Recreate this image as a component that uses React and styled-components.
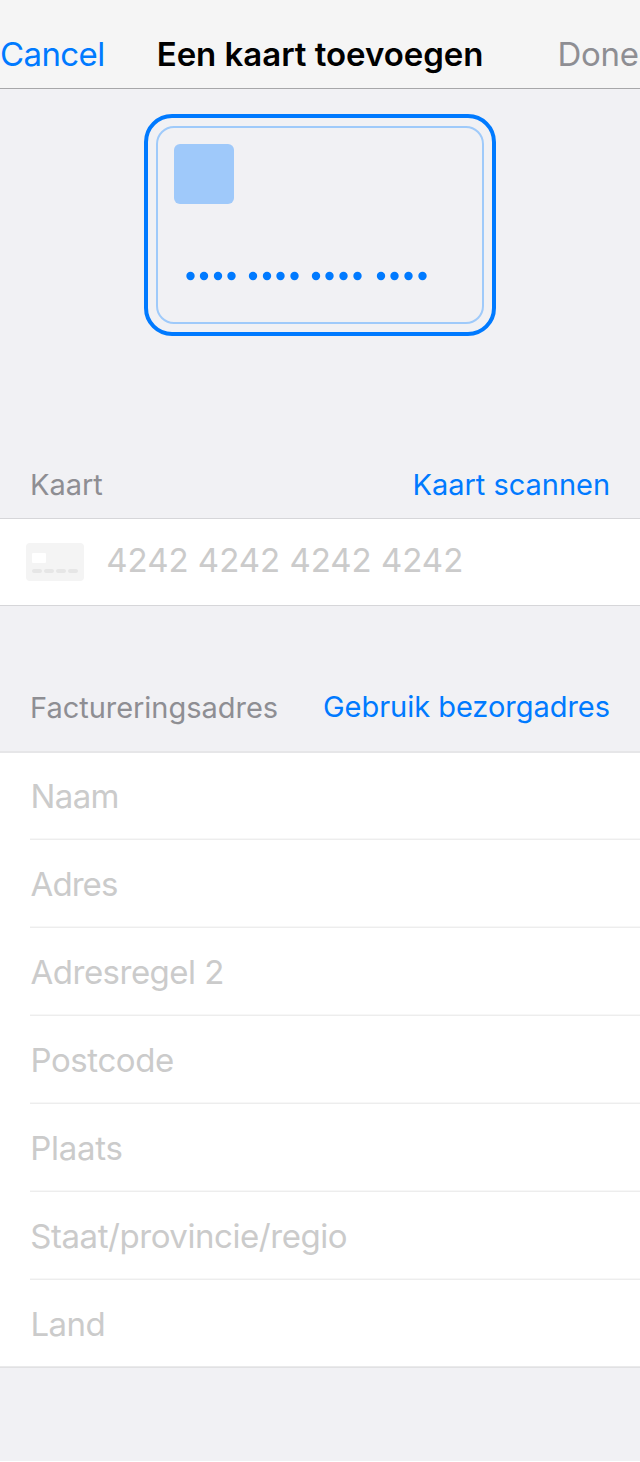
import React from "react";
import styled, { createGlobalStyle } from "styled-components";

const GlobalStyle = createGlobalStyle`
  * { box-sizing: border-box; }
  body {
    margin: 0;
    background: #fff;
    font-family: Inter, "Liberation Sans", sans-serif;
  }
`;

const Screen = styled.main`
  display: flex;
  flex-direction: column;
  width: 640px;
  height: 1461px;
  overflow: hidden;
  background: #f1f1f4;
`;

const NavBar = styled.header`
  display: grid;
  grid-template-columns: 156.7px 1fr 82.6px;
  height: 89px;
  padding-top: 34px;
  background: #f5f5f5;
  border-bottom: 1px solid #a7a7a9;
`;

const NavButton = styled.button`
  height: 40px;
  padding: 0;
  border: 0;
  background: none;
  color: ${(p) => (p.$muted ? "#8e8e93" : "#007aff")};
  font: 400 33px/40px Inter, sans-serif;
  letter-spacing: ${(p) => p.$tracking}px;
  text-align: left;
  white-space: nowrap;
`;

const Title = styled.h1`
  margin: 0;
  color: #000;
  font-size: 33px;
  font-weight: 600;
  line-height: 40px;
  letter-spacing: -0.03px;
  white-space: nowrap;
`;

const Hero = styled.section`
  display: flex;
  justify-content: center;
  height: 361px;
  padding-top: 25px;
`;

const CardFrame = styled.div`
  width: 352px;
  height: 222px;
  padding: 8px;
  border: 4px solid #007aff;
  border-radius: 28px;
`;

const CardFace = styled.div`
  display: flex;
  flex-direction: column;
  justify-content: space-between;
  height: 198px;
  padding: 16px 16px 40px;
  border: 2px solid #9fcafa;
  border-radius: 18px;
`;

const Chip = styled.div`
  width: 60px;
  height: 60px;
  border-radius: 6px;
  background: #9fc9fa;
`;

const DigitDots = styled.svg`
  display: block;
  width: 260px;
  height: 12px;
  fill: #007aff;
`;

const SectionHeader = styled.div`
  display: flex;
  justify-content: space-between;
  height: ${(p) => p.$height}px;
  padding: ${(p) => p.$top}px 30px 0 30px;
  line-height: 36px;
  font-size: 29px;
`;

const SectionLabel = styled.span`
  color: #8e8e93;
  padding-top: ${(p) => p.$drop || 0}px;
  letter-spacing: -0.03px;
`;

const LinkButton = styled.button`
  height: 36px;
  padding: 0;
  border: 0;
  background: none;
  color: #007aff;
  font: 400 29px/36px Inter, sans-serif;
  letter-spacing: -0.03px;
  white-space: nowrap;
`;

const CardRow = styled.div`
  display: flex;
  align-items: flex-start;
  height: 88px;
  padding: 24px 0 0 26px;
  gap: 22.3px;
  background: #fff;
  border-top: 1px solid #d6d6d9;
  border-bottom: 1px solid #d6d6d9;
`;

const CardIcon = styled.svg`
  display: block;
  width: 58px;
  height: 38px;
`;

const Placeholder = styled.span`
  color: #cbcbcb;
  font-size: 33px;
  line-height: 40px;
  letter-spacing: ${(p) => p.$tracking}px;
  white-space: nowrap;
`;

const NumberSlot = styled.div`
  height: 40px;
  margin-top: -3px;
`;

const FieldList = styled.div`
  height: 617px;
  background: #fff;
  border-top: 2px solid #e6e6e8;
`;

const Field = styled.div`
  display: flex;
  height: 88px;
  padding-left: 30px;
  margin-top: ${(p) => (p.$first ? -1 : 0)}px;
`;

const FieldBody = styled.div`
  display: flex;
  flex: 1;
  padding: 24px 0 0 ${(p) => p.$nudge}px;
  border-bottom: ${(p) => (p.$last ? 0 : 1)}px solid #ededed;
  box-shadow: ${(p) => (p.$last ? "none" : "inset 0 -1px #f7f7f7")};
`;

const ListEnd = styled.div`
  height: 2px;
  margin-top: -2px;
  border-top: 1px solid #eaeaeb;
  background: #e1e1e3;
`;

// The dots of a group sit on an even pitch; groups are separated by a wider gap.
const dots = [
  16.5, 30, 44, 57.5, 79, 93, 106.5, 120.5, 142, 155.5, 169.5, 183.5, 207, 220.5,
  234.5, 248.5,
];

const fields = [
  { label: "Naam", tracking: -0.6, nudge: 0.5 },
  { label: "Adres", tracking: -0.95, nudge: 0.6 },
  { label: "Adresregel 2", tracking: -0.516, nudge: 0.6 },
  { label: "Postcode", tracking: -0.418, nudge: 0.5 },
  { label: "Plaats", tracking: -0.3, nudge: 0.3 },
  { label: "Staat/provincie/regio", tracking: -0.45, nudge: 0.3 },
  { label: "Land", tracking: -0.6, nudge: 0.5 },
];

export default function App() {
  return (
    <>
      <GlobalStyle />
      <Screen>
        <NavBar>
          <NavButton $tracking={-0.6}>Cancel</NavButton>
          <Title>Een kaart toevoegen</Title>
          <NavButton $muted $tracking={-0.267}>Done</NavButton>
        </NavBar>

        <Hero>
          <CardFrame>
            <CardFace>
              <Chip />
              <DigitDots viewBox="0 0 260 12">
                {dots.map((x) => (
                  <circle key={x} cx={x} cy="6" r="4.2" />
                ))}
              </DigitDots>
            </CardFace>
          </CardFrame>
        </Hero>

        <SectionHeader $height={68} $top={17}>
          <SectionLabel>Kaart</SectionLabel>
          <LinkButton>Kaart scannen</LinkButton>
        </SectionHeader>
        <CardRow>
          <CardIcon viewBox="0 0 58 38">
            <rect width="58" height="38" rx="4" fill="#f4f4f4" />
            <rect x="6" y="10" width="14" height="10" rx="1" fill="#fff" />
            {[6, 18, 30, 42].map((x) => (
              <rect key={x} x={x} y="26" width="10" height="4" rx="2" fill="#e6e6e6" />
            ))}
          </CardIcon>
          <NumberSlot>
            <Placeholder $tracking={-0.02}>4242 4242 4242 4242</Placeholder>
          </NumberSlot>
        </CardRow>

        <SectionHeader $height={145} $top={83}>
          <SectionLabel $drop={1}>Factureringsadres</SectionLabel>
          <LinkButton>Gebruik bezorgadres</LinkButton>
        </SectionHeader>
        <FieldList>
          {fields.map((f, i) => (
            <Field key={f.label} $first={i === 0}>
              <FieldBody $nudge={f.nudge} $last={i === fields.length - 1}>
                <Placeholder $tracking={f.tracking}>{f.label}</Placeholder>
              </FieldBody>
            </Field>
          ))}
        </FieldList>
        <ListEnd />
      </Screen>
    </>
  );
}
